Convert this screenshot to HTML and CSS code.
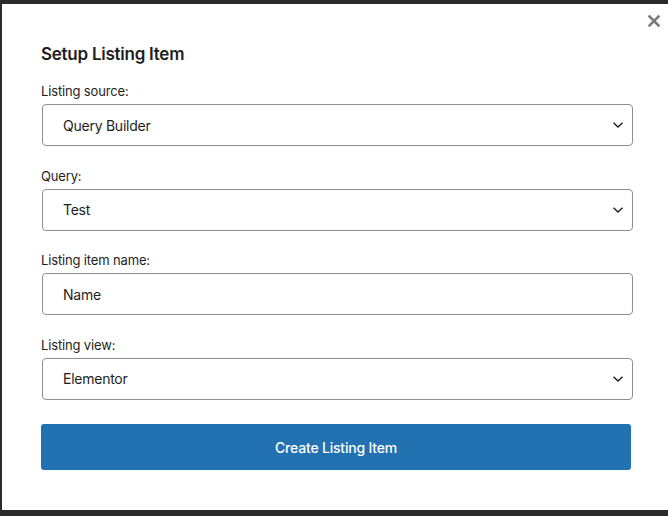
FILE: index.html
```html
<!DOCTYPE html>
<html lang="en">
<head>
<meta charset="utf-8">
<title>Setup Listing Item</title>
<link rel="stylesheet" href="styles.css">
</head>
<body>
<div class="modal">
  <button class="close" aria-label="Close">
    <svg width="12" height="12" viewBox="0 0 12 12"><path d="M1.5 1.5 L10.5 10.5 M10.5 1.5 L1.5 10.5" stroke="#787c82" stroke-width="2.6" stroke-linecap="square"/></svg>
  </button>
  <h2 class="title">Setup Listing Item</h2>
  <div class="field">
    <div class="label">Listing source:</div>
    <div class="control select">
      <span class="value">Query Builder</span>
      <svg class="chev" width="12" height="8" viewBox="0 0 12 8"><path d="M1.5 1.8 L6 6 L10.5 1.8" fill="none" stroke="#1e1e1e" stroke-width="1.4"/></svg>
    </div>
  </div>
  <div class="field">
    <div class="label">Query:</div>
    <div class="control select">
      <span class="value">Test</span>
      <svg class="chev" width="12" height="8" viewBox="0 0 12 8"><path d="M1.5 1.8 L6 6 L10.5 1.8" fill="none" stroke="#1e1e1e" stroke-width="1.4"/></svg>
    </div>
  </div>
  <div class="field">
    <div class="label">Listing item name:</div>
    <div class="control">
      <span class="value">Name</span>
    </div>
  </div>
  <div class="field">
    <div class="label">Listing view:</div>
    <div class="control select">
      <span class="value">Elementor</span>
      <svg class="chev" width="12" height="8" viewBox="0 0 12 8"><path d="M1.5 1.8 L6 6 L10.5 1.8" fill="none" stroke="#1e1e1e" stroke-width="1.4"/></svg>
    </div>
  </div>
  <button class="submit">Create Listing Item</button>
</div>
</body>
</html>
```
FILE: styles.css
```css
html, body {
  margin: 0;
  padding: 0;
}
body {
  background: #2b2b2b;
  width: 668px;
  height: 516px;
  overflow: hidden;
  font-family: Inter, "Noto Sans", sans-serif;
  color: #1e1e1e;
}
.modal {
  position: relative;
  margin: 4px 0 0 2px;
  height: 506px;
  background: #ffffff;
  box-sizing: border-box;
  padding: 38px 35px 0 39px;
}
.close {
  position: absolute;
  top: 11px;
  right: 8px;
  width: 12px;
  height: 12px;
  padding: 0;
  border: 0;
  background: none;
  display: flex;
}
.title {
  margin: 0 0 16px;
  font-size: 17px;
  line-height: 24px;
  font-weight: 600;
  letter-spacing: -0.25px;
  color: #1e1e1e;
}
.field {
  margin-bottom: 20.5px;
}
.label {
  font-size: 13px;
  line-height: 18px;
  letter-spacing: -0.15px;
  color: #1e1e1e;
  margin-bottom: 4px;
}
.control {
  margin-left: 1px;
  height: 42px;
  box-sizing: border-box;
  border: 1px solid #8c8f94;
  border-radius: 4px;
  display: flex;
  align-items: center;
  padding: 0 8px 0 20px;
  font-size: 14px;
  letter-spacing: -0.25px;
  color: #1e1e1e;
}
.chev {
  margin-left: auto;
}
.submit {
  display: block;
  width: 590px;
  height: 46px;
  margin-top: 24.5px;
  border: 0;
  border-radius: 3px;
  background: #2271b1;
  color: #ffffff;
  font-family: Inter, "Noto Sans", sans-serif;
  font-size: 14px;
  font-weight: 500;
  letter-spacing: -0.2px;
}
```
